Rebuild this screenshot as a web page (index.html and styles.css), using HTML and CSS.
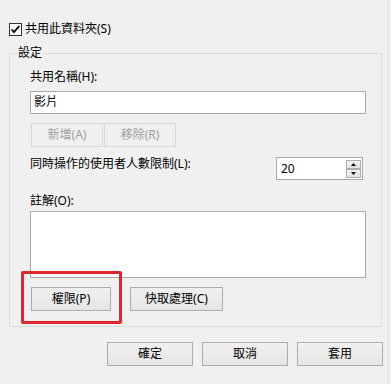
FILE: index.html
```html
<!DOCTYPE html>
<html lang="zh-Hant">
<head>
<meta charset="utf-8">
<link rel="stylesheet" href="styles.css">
</head>
<body>
<div class="dialog">
  <div class="share-row">
    <span class="checkbox">
      <svg width="13" height="13" viewBox="0 0 13 13"><rect x="0.5" y="0.5" width="12" height="12" fill="#fff" stroke="#333"/><path d="M2.5 6.5 L5 9.2 L10.3 3" fill="none" stroke="#000" stroke-width="1.8"/></svg>
    </span>
    <span class="label">共用此資料夾(S)</span>
  </div>

  <fieldset class="group">
    <legend>設定</legend>
    <div class="label">共用名稱(H):</div>
    <div class="input">影片</div>
    <div class="btn-row small">
      <button class="btn disabled w72">新增(A)</button>
      <button class="btn disabled w72">移除(R)</button>
    </div>
    <div class="limit-row">
      <span class="label">同時操作的使用者人數限制(L):</span>
      <div class="spin">
        <span class="spin-val">20</span>
        <div class="spin-btns">
          <span class="spin-btn"><svg width="5" height="3" viewBox="0 0 5 3"><path d="M0 3 L2.5 0 L5 3Z" fill="#000"/></svg></span>
          <span class="spin-btn"><svg width="5" height="3" viewBox="0 0 5 3"><path d="M0 0 L2.5 3 L5 0Z" fill="#000"/></svg></span>
        </div>
      </div>
    </div>
    <div class="label comment-label">註解(O):</div>
    <div class="textarea"></div>
    <div class="btn-row perm-row">
      <button class="btn w80">權限(P)</button>
      <button class="btn w93">快取處理(C)</button>
      <div class="highlight"></div>
    </div>
  </fieldset>

  <div class="footer">
    <button class="btn w86">確定</button>
    <button class="btn w86">取消</button>
    <button class="btn w86">套用</button>
  </div>
</div>
</body>
</html>
```

FILE: styles.css
```css
html, body {
  margin: 0;
  padding: 0;
  background: #f0f0f0;
}
body {
  width: 391px;
  height: 384px;
  overflow: hidden;
  font-family: "Noto Sans", "Noto Sans CJK TC", sans-serif;
  font-size: 12px;
  line-height: 16px;
  color: #000;
}
.dialog {
  position: relative;
  height: 384px;
  display: flex;
  flex-direction: column;
  border-right: 1px solid #e2e2e2;
  box-sizing: border-box;
  width: 389px;
}
.share-row {
  display: flex;
  align-items: center;
  margin-top: 21px;
  margin-left: 9px;
  height: 16px;
}
.checkbox {
  width: 13px;
  height: 13px;
  display: block;
  margin-right: 3px;
}
.checkbox svg { display: block; }

.group {
  margin: 8px 6px 0 9px;
  padding: 8px 15px 15px 20px;
  border: 1px solid #dcdcdc;
  min-width: 0;
  display: flex;
  flex-direction: column;
}
.group legend {
  padding: 0 2px;
  margin-left: -14px;
  line-height: 16px;
}
.input {
  margin-top: 6px;
  height: 23px;
  box-sizing: border-box;
  border: 1px solid #a9a9a9;
  background: #fff;
  padding: 0 0 0 3px;
  line-height: 20px;
}
.btn-row {
  display: flex;
}
.btn-row.small {
  margin-top: 9px;
  margin-left: 1px;
  gap: 1px;
}
.btn {
  height: 24px;
  box-sizing: border-box;
  border: 1px solid #acacac;
  background: linear-gradient(#f0f0f0, #e5e5e5);
  font: inherit;
  color: #000;
  padding: 0;
  margin: 0;
  line-height: 20px;
}
.btn.disabled {
  color: #a0a0a0;
  border-color: #d9d9d9;
  background: #f0f0f0;
}
.w72 { width: 72px; }
.w80 { width: 80px; }
.w93 { width: 93px; }
.w86 { width: 86px; }

.limit-row {
  display: flex;
  justify-content: space-between;
  align-items: flex-start;
  margin-top: 9px;
}
.spin {
  margin-top: 1px;
  margin-right: 3px;
  width: 87px;
  height: 23px;
  box-sizing: border-box;
  border: 1px solid #a9a9a9;
  background: #fff;
  display: flex;
  align-items: center;
  justify-content: space-between;
}
.spin-val {
  padding-left: 4px;
}
.spin-btns {
  display: flex;
  flex-direction: column;
  margin-right: 1px;
}
.spin-btn {
  width: 15px;
  height: 9px;
  box-sizing: border-box;
  border: 1px solid #adadad;
  background: linear-gradient(#f2f2f2, #e2e2e2);
  display: flex;
  align-items: center;
  justify-content: center;
}
.spin-btn svg { display: block; }
.comment-label {
  margin-top: 13px;
}
.textarea {
  margin-top: 2px;
  height: 67px;
  box-sizing: border-box;
  border: 1px solid #a9a9a9;
  background: #fff;
}
.perm-row {
  position: relative;
  margin-top: 9px;
  margin-left: 1px;
  gap: 19px;
}
.highlight {
  position: absolute;
  left: -10px;
  top: -16px;
  width: 101px;
  height: 53px;
  box-sizing: border-box;
  border: 3px solid #e1262e;
  border-radius: 2px;
}
.footer {
  display: flex;
  justify-content: flex-end;
  gap: 9px;
  margin-top: 15px;
  margin-right: 5px;
}
```
